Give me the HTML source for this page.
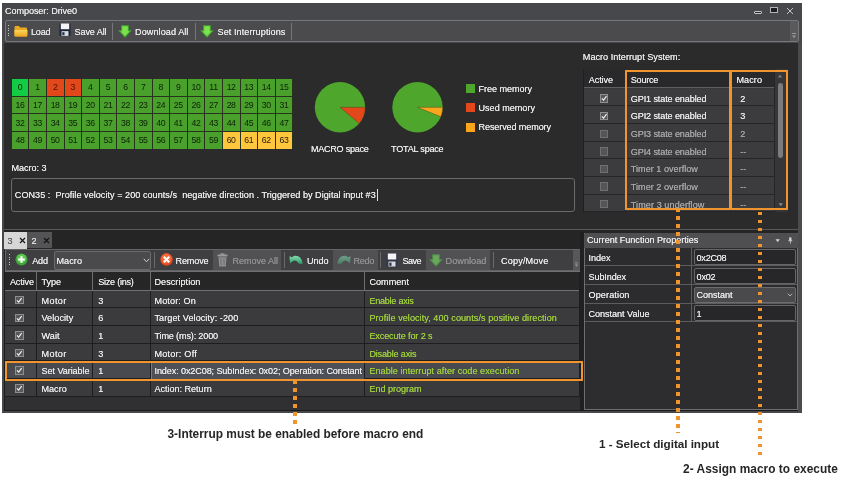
<!DOCTYPE html>
<html><head><meta charset="utf-8"><title>Composer: Drive0</title>
<style>
html,body{margin:0;padding:0;background:#fff;}
body{width:858px;height:496px;position:relative;overflow:hidden;font-family:"Liberation Sans",sans-serif;-webkit-font-smoothing:antialiased;}
#root{position:absolute;left:0;top:0;width:858px;height:496px;will-change:transform;}
div,span.t,svg{position:absolute;box-sizing:border-box;}
span.t{white-space:pre;text-shadow:0 0 0.6px;}
</style></head><body><div id="root">
<div style="left:2.20px;top:2.80px;width:799.80px;height:410.00px;background:#47484b;"></div>
<span class="t" style="left:5.00px;top:3.10px;height:16px;line-height:16px;font-size:9.1px;color:#e6e6e6;letter-spacing:-0.083px;">Composer: Drive0</span>
<div style="left:754.00px;top:11.00px;width:7.50px;height:2.80px;background:#2a2a2c;border:0.8px solid #c4c4c4;border-radius:1px;"></div>
<div style="left:770.00px;top:7.40px;width:8.00px;height:6.00px;background:#1e1e1e;border:1px solid #b4b4b6;border-top-width:1.6px;"></div>
<svg style="left:786px;top:6.5px;" width="8" height="8" viewBox="0 0 8 8"><path d="M1 1L7 7M7 1L1 7" stroke="#d0d0d0" stroke-width="0.9" fill="none"/></svg>
<div style="left:4.60px;top:19.50px;width:794.60px;height:22.80px;background:#4b4b4e;border:1px solid #77777a;border-radius:2px;"></div>
<div style="left:8.00px;top:25.00px;width:1.20px;height:1.20px;background:#c8c8c8;"></div>
<div style="left:8.00px;top:27.50px;width:1.20px;height:1.20px;background:#c8c8c8;"></div>
<div style="left:8.00px;top:30.00px;width:1.20px;height:1.20px;background:#c8c8c8;"></div>
<div style="left:8.00px;top:32.50px;width:1.20px;height:1.20px;background:#c8c8c8;"></div>
<div style="left:8.00px;top:35.00px;width:1.20px;height:1.20px;background:#c8c8c8;"></div>
<div style="left:790.00px;top:21.00px;width:8.00px;height:20.00px;background:#5a5a5d;"></div>
<svg style="left:791px;top:33px" width="6" height="6" viewBox="0 0 6 6"><path d="M1 0.5H5" stroke="#999" stroke-width="1"/><path d="M1 2.5H5L3 5Z" fill="#999"/></svg>
<svg style="left:14px;top:25.3px" width="14" height="12" viewBox="0 0 14 12"><defs><linearGradient id="fg" x1="0" y1="0" x2="0" y2="1"><stop offset="0" stop-color="#fbd65a"/><stop offset="1" stop-color="#f0a41c"/></linearGradient></defs><path d="M0.5 2.2Q0.5 1 1.6 1H5L6.2 2.4H12Q13 2.4 13 3.4V10.5Q13 11.5 12 11.5H1.5Q0.5 11.5 0.5 10.5Z" fill="#e9a820"/><path d="M0.5 5H13.5V10.6Q13.5 11.6 12.5 11.6H1.5Q0.5 11.6 0.5 10.6Z" fill="url(#fg)"/></svg>
<span class="t" style="left:31.00px;top:23.90px;height:16px;line-height:16px;font-size:9.1px;color:#e8e8e8;letter-spacing:-0.186px;">Load</span>
<svg style="left:58.5px;top:23.4px" width="12" height="13.4" viewBox="0 0 12 14" preserveAspectRatio="none"><rect x="0.5" y="0.5" width="11" height="13" rx="1" fill="#1c2438"/><rect x="1.8" y="0.5" width="8.4" height="6" fill="#f4f4f4"/><rect x="2.5" y="8.5" width="7" height="5" fill="#d8dbe2"/><rect x="3.3" y="9.6" width="2.2" height="3.2" fill="#2a3040"/></svg>
<span class="t" style="left:74.50px;top:23.90px;height:16px;line-height:16px;font-size:9.1px;color:#e8e8e8;letter-spacing:-0.110px;">Save All</span>
<div style="left:111.50px;top:23.00px;width:1.00px;height:17.00px;background:#77777a;"></div>
<svg style="left:118px;top:25px" width="14" height="13" viewBox="0 0 14 13"><path d="M3.2 0.3H10.8V5.2H13.8L7 12.8L0.2 5.2H3.2Z" fill="#3fae2a"/><path d="M4.2 1.2H9.8V6.2H11.6L7 11L2.4 6.2H4.2Z" fill="#7fe04f"/></svg>
<span class="t" style="left:135.00px;top:23.90px;height:16px;line-height:16px;font-size:9.1px;color:#e8e8e8;letter-spacing:0.074px;">Download All</span>
<div style="left:194.50px;top:23.00px;width:1.00px;height:17.00px;background:#77777a;"></div>
<svg style="left:200px;top:25px" width="14" height="13" viewBox="0 0 14 13"><path d="M3.2 0.3H10.8V5.2H13.8L7 12.8L0.2 5.2H3.2Z" fill="#3fae2a"/><path d="M4.2 1.2H9.8V6.2H11.6L7 11L2.4 6.2H4.2Z" fill="#7fe04f"/></svg>
<span class="t" style="left:217.50px;top:23.90px;height:16px;line-height:16px;font-size:9.1px;color:#e8e8e8;letter-spacing:0.072px;">Set Interruptions</span>
<div style="left:290.50px;top:23.00px;width:1.00px;height:17.00px;background:#77777a;"></div>
<div style="left:4.30px;top:43.00px;width:794.70px;height:186.50px;background:#2b2b2b;"></div>
<div style="left:11.50px;top:78.50px;width:281.20px;height:70.50px;background:#27331d;"></div>
<div style="left:11.80px;top:78.80px;width:16.60px;height:16.80px;background:#12cc46;"></div>
<span class="t" style="left:17.68px;top:79.20px;height:16px;line-height:16px;font-size:8.7px;color:#0d2208;letter-spacing:-0.35px;text-shadow:none;">0</span>
<div style="left:29.40px;top:78.80px;width:16.60px;height:16.80px;background:#49a02a;"></div>
<span class="t" style="left:35.28px;top:79.20px;height:16px;line-height:16px;font-size:8.7px;color:#0d2208;letter-spacing:-0.35px;text-shadow:none;">1</span>
<div style="left:47.00px;top:78.80px;width:16.60px;height:16.80px;background:#e2481a;"></div>
<span class="t" style="left:52.88px;top:79.20px;height:16px;line-height:16px;font-size:8.7px;color:#4a1204;letter-spacing:-0.35px;text-shadow:none;">2</span>
<div style="left:64.60px;top:78.80px;width:16.60px;height:16.80px;background:#e2481a;"></div>
<span class="t" style="left:70.48px;top:79.20px;height:16px;line-height:16px;font-size:8.7px;color:#4a1204;letter-spacing:-0.35px;text-shadow:none;">3</span>
<div style="left:82.20px;top:78.80px;width:16.60px;height:16.80px;background:#49a02a;"></div>
<span class="t" style="left:88.08px;top:79.20px;height:16px;line-height:16px;font-size:8.7px;color:#0d2208;letter-spacing:-0.35px;text-shadow:none;">4</span>
<div style="left:99.80px;top:78.80px;width:16.60px;height:16.80px;background:#49a02a;"></div>
<span class="t" style="left:105.68px;top:79.20px;height:16px;line-height:16px;font-size:8.7px;color:#0d2208;letter-spacing:-0.35px;text-shadow:none;">5</span>
<div style="left:117.40px;top:78.80px;width:16.60px;height:16.80px;background:#49a02a;"></div>
<span class="t" style="left:123.28px;top:79.20px;height:16px;line-height:16px;font-size:8.7px;color:#0d2208;letter-spacing:-0.35px;text-shadow:none;">6</span>
<div style="left:135.00px;top:78.80px;width:16.60px;height:16.80px;background:#49a02a;"></div>
<span class="t" style="left:140.88px;top:79.20px;height:16px;line-height:16px;font-size:8.7px;color:#0d2208;letter-spacing:-0.35px;text-shadow:none;">7</span>
<div style="left:152.60px;top:78.80px;width:16.60px;height:16.80px;background:#49a02a;"></div>
<span class="t" style="left:158.48px;top:79.20px;height:16px;line-height:16px;font-size:8.7px;color:#0d2208;letter-spacing:-0.35px;text-shadow:none;">8</span>
<div style="left:170.20px;top:78.80px;width:16.60px;height:16.80px;background:#49a02a;"></div>
<span class="t" style="left:176.08px;top:79.20px;height:16px;line-height:16px;font-size:8.7px;color:#0d2208;letter-spacing:-0.35px;text-shadow:none;">9</span>
<div style="left:187.80px;top:78.80px;width:16.60px;height:16.80px;background:#49a02a;"></div>
<span class="t" style="left:191.44px;top:79.20px;height:16px;line-height:16px;font-size:8.7px;color:#0d2208;letter-spacing:-0.35px;text-shadow:none;">10</span>
<div style="left:205.40px;top:78.80px;width:16.60px;height:16.80px;background:#49a02a;"></div>
<span class="t" style="left:209.36px;top:79.20px;height:16px;line-height:16px;font-size:8.7px;color:#0d2208;letter-spacing:-0.35px;text-shadow:none;">11</span>
<div style="left:223.00px;top:78.80px;width:16.60px;height:16.80px;background:#49a02a;"></div>
<span class="t" style="left:226.64px;top:79.20px;height:16px;line-height:16px;font-size:8.7px;color:#0d2208;letter-spacing:-0.35px;text-shadow:none;">12</span>
<div style="left:240.60px;top:78.80px;width:16.60px;height:16.80px;background:#49a02a;"></div>
<span class="t" style="left:244.24px;top:79.20px;height:16px;line-height:16px;font-size:8.7px;color:#0d2208;letter-spacing:-0.35px;text-shadow:none;">13</span>
<div style="left:258.20px;top:78.80px;width:16.60px;height:16.80px;background:#49a02a;"></div>
<span class="t" style="left:261.84px;top:79.20px;height:16px;line-height:16px;font-size:8.7px;color:#0d2208;letter-spacing:-0.35px;text-shadow:none;">14</span>
<div style="left:275.80px;top:78.80px;width:16.60px;height:16.80px;background:#49a02a;"></div>
<span class="t" style="left:279.44px;top:79.20px;height:16px;line-height:16px;font-size:8.7px;color:#0d2208;letter-spacing:-0.35px;text-shadow:none;">15</span>
<div style="left:11.80px;top:96.50px;width:16.60px;height:16.80px;background:#49a02a;"></div>
<span class="t" style="left:15.44px;top:96.90px;height:16px;line-height:16px;font-size:8.7px;color:#0d2208;letter-spacing:-0.35px;text-shadow:none;">16</span>
<div style="left:29.40px;top:96.50px;width:16.60px;height:16.80px;background:#49a02a;"></div>
<span class="t" style="left:33.04px;top:96.90px;height:16px;line-height:16px;font-size:8.7px;color:#0d2208;letter-spacing:-0.35px;text-shadow:none;">17</span>
<div style="left:47.00px;top:96.50px;width:16.60px;height:16.80px;background:#49a02a;"></div>
<span class="t" style="left:50.64px;top:96.90px;height:16px;line-height:16px;font-size:8.7px;color:#0d2208;letter-spacing:-0.35px;text-shadow:none;">18</span>
<div style="left:64.60px;top:96.50px;width:16.60px;height:16.80px;background:#49a02a;"></div>
<span class="t" style="left:68.24px;top:96.90px;height:16px;line-height:16px;font-size:8.7px;color:#0d2208;letter-spacing:-0.35px;text-shadow:none;">19</span>
<div style="left:82.20px;top:96.50px;width:16.60px;height:16.80px;background:#49a02a;"></div>
<span class="t" style="left:85.84px;top:96.90px;height:16px;line-height:16px;font-size:8.7px;color:#0d2208;letter-spacing:-0.35px;text-shadow:none;">20</span>
<div style="left:99.80px;top:96.50px;width:16.60px;height:16.80px;background:#49a02a;"></div>
<span class="t" style="left:103.44px;top:96.90px;height:16px;line-height:16px;font-size:8.7px;color:#0d2208;letter-spacing:-0.35px;text-shadow:none;">21</span>
<div style="left:117.40px;top:96.50px;width:16.60px;height:16.80px;background:#49a02a;"></div>
<span class="t" style="left:121.04px;top:96.90px;height:16px;line-height:16px;font-size:8.7px;color:#0d2208;letter-spacing:-0.35px;text-shadow:none;">22</span>
<div style="left:135.00px;top:96.50px;width:16.60px;height:16.80px;background:#49a02a;"></div>
<span class="t" style="left:138.64px;top:96.90px;height:16px;line-height:16px;font-size:8.7px;color:#0d2208;letter-spacing:-0.35px;text-shadow:none;">23</span>
<div style="left:152.60px;top:96.50px;width:16.60px;height:16.80px;background:#49a02a;"></div>
<span class="t" style="left:156.24px;top:96.90px;height:16px;line-height:16px;font-size:8.7px;color:#0d2208;letter-spacing:-0.35px;text-shadow:none;">24</span>
<div style="left:170.20px;top:96.50px;width:16.60px;height:16.80px;background:#49a02a;"></div>
<span class="t" style="left:173.84px;top:96.90px;height:16px;line-height:16px;font-size:8.7px;color:#0d2208;letter-spacing:-0.35px;text-shadow:none;">25</span>
<div style="left:187.80px;top:96.50px;width:16.60px;height:16.80px;background:#49a02a;"></div>
<span class="t" style="left:191.44px;top:96.90px;height:16px;line-height:16px;font-size:8.7px;color:#0d2208;letter-spacing:-0.35px;text-shadow:none;">26</span>
<div style="left:205.40px;top:96.50px;width:16.60px;height:16.80px;background:#49a02a;"></div>
<span class="t" style="left:209.04px;top:96.90px;height:16px;line-height:16px;font-size:8.7px;color:#0d2208;letter-spacing:-0.35px;text-shadow:none;">27</span>
<div style="left:223.00px;top:96.50px;width:16.60px;height:16.80px;background:#49a02a;"></div>
<span class="t" style="left:226.64px;top:96.90px;height:16px;line-height:16px;font-size:8.7px;color:#0d2208;letter-spacing:-0.35px;text-shadow:none;">28</span>
<div style="left:240.60px;top:96.50px;width:16.60px;height:16.80px;background:#49a02a;"></div>
<span class="t" style="left:244.24px;top:96.90px;height:16px;line-height:16px;font-size:8.7px;color:#0d2208;letter-spacing:-0.35px;text-shadow:none;">29</span>
<div style="left:258.20px;top:96.50px;width:16.60px;height:16.80px;background:#49a02a;"></div>
<span class="t" style="left:261.84px;top:96.90px;height:16px;line-height:16px;font-size:8.7px;color:#0d2208;letter-spacing:-0.35px;text-shadow:none;">30</span>
<div style="left:275.80px;top:96.50px;width:16.60px;height:16.80px;background:#49a02a;"></div>
<span class="t" style="left:279.44px;top:96.90px;height:16px;line-height:16px;font-size:8.7px;color:#0d2208;letter-spacing:-0.35px;text-shadow:none;">31</span>
<div style="left:11.80px;top:114.20px;width:16.60px;height:16.80px;background:#49a02a;"></div>
<span class="t" style="left:15.44px;top:114.60px;height:16px;line-height:16px;font-size:8.7px;color:#0d2208;letter-spacing:-0.35px;text-shadow:none;">32</span>
<div style="left:29.40px;top:114.20px;width:16.60px;height:16.80px;background:#49a02a;"></div>
<span class="t" style="left:33.04px;top:114.60px;height:16px;line-height:16px;font-size:8.7px;color:#0d2208;letter-spacing:-0.35px;text-shadow:none;">33</span>
<div style="left:47.00px;top:114.20px;width:16.60px;height:16.80px;background:#49a02a;"></div>
<span class="t" style="left:50.64px;top:114.60px;height:16px;line-height:16px;font-size:8.7px;color:#0d2208;letter-spacing:-0.35px;text-shadow:none;">34</span>
<div style="left:64.60px;top:114.20px;width:16.60px;height:16.80px;background:#49a02a;"></div>
<span class="t" style="left:68.24px;top:114.60px;height:16px;line-height:16px;font-size:8.7px;color:#0d2208;letter-spacing:-0.35px;text-shadow:none;">35</span>
<div style="left:82.20px;top:114.20px;width:16.60px;height:16.80px;background:#49a02a;"></div>
<span class="t" style="left:85.84px;top:114.60px;height:16px;line-height:16px;font-size:8.7px;color:#0d2208;letter-spacing:-0.35px;text-shadow:none;">36</span>
<div style="left:99.80px;top:114.20px;width:16.60px;height:16.80px;background:#49a02a;"></div>
<span class="t" style="left:103.44px;top:114.60px;height:16px;line-height:16px;font-size:8.7px;color:#0d2208;letter-spacing:-0.35px;text-shadow:none;">37</span>
<div style="left:117.40px;top:114.20px;width:16.60px;height:16.80px;background:#49a02a;"></div>
<span class="t" style="left:121.04px;top:114.60px;height:16px;line-height:16px;font-size:8.7px;color:#0d2208;letter-spacing:-0.35px;text-shadow:none;">38</span>
<div style="left:135.00px;top:114.20px;width:16.60px;height:16.80px;background:#49a02a;"></div>
<span class="t" style="left:138.64px;top:114.60px;height:16px;line-height:16px;font-size:8.7px;color:#0d2208;letter-spacing:-0.35px;text-shadow:none;">39</span>
<div style="left:152.60px;top:114.20px;width:16.60px;height:16.80px;background:#49a02a;"></div>
<span class="t" style="left:156.24px;top:114.60px;height:16px;line-height:16px;font-size:8.7px;color:#0d2208;letter-spacing:-0.35px;text-shadow:none;">40</span>
<div style="left:170.20px;top:114.20px;width:16.60px;height:16.80px;background:#49a02a;"></div>
<span class="t" style="left:173.84px;top:114.60px;height:16px;line-height:16px;font-size:8.7px;color:#0d2208;letter-spacing:-0.35px;text-shadow:none;">41</span>
<div style="left:187.80px;top:114.20px;width:16.60px;height:16.80px;background:#49a02a;"></div>
<span class="t" style="left:191.44px;top:114.60px;height:16px;line-height:16px;font-size:8.7px;color:#0d2208;letter-spacing:-0.35px;text-shadow:none;">42</span>
<div style="left:205.40px;top:114.20px;width:16.60px;height:16.80px;background:#49a02a;"></div>
<span class="t" style="left:209.04px;top:114.60px;height:16px;line-height:16px;font-size:8.7px;color:#0d2208;letter-spacing:-0.35px;text-shadow:none;">43</span>
<div style="left:223.00px;top:114.20px;width:16.60px;height:16.80px;background:#49a02a;"></div>
<span class="t" style="left:226.64px;top:114.60px;height:16px;line-height:16px;font-size:8.7px;color:#0d2208;letter-spacing:-0.35px;text-shadow:none;">44</span>
<div style="left:240.60px;top:114.20px;width:16.60px;height:16.80px;background:#49a02a;"></div>
<span class="t" style="left:244.24px;top:114.60px;height:16px;line-height:16px;font-size:8.7px;color:#0d2208;letter-spacing:-0.35px;text-shadow:none;">45</span>
<div style="left:258.20px;top:114.20px;width:16.60px;height:16.80px;background:#49a02a;"></div>
<span class="t" style="left:261.84px;top:114.60px;height:16px;line-height:16px;font-size:8.7px;color:#0d2208;letter-spacing:-0.35px;text-shadow:none;">46</span>
<div style="left:275.80px;top:114.20px;width:16.60px;height:16.80px;background:#49a02a;"></div>
<span class="t" style="left:279.44px;top:114.60px;height:16px;line-height:16px;font-size:8.7px;color:#0d2208;letter-spacing:-0.35px;text-shadow:none;">47</span>
<div style="left:11.80px;top:131.90px;width:16.60px;height:16.80px;background:#49a02a;"></div>
<span class="t" style="left:15.44px;top:132.30px;height:16px;line-height:16px;font-size:8.7px;color:#0d2208;letter-spacing:-0.35px;text-shadow:none;">48</span>
<div style="left:29.40px;top:131.90px;width:16.60px;height:16.80px;background:#49a02a;"></div>
<span class="t" style="left:33.04px;top:132.30px;height:16px;line-height:16px;font-size:8.7px;color:#0d2208;letter-spacing:-0.35px;text-shadow:none;">49</span>
<div style="left:47.00px;top:131.90px;width:16.60px;height:16.80px;background:#49a02a;"></div>
<span class="t" style="left:50.64px;top:132.30px;height:16px;line-height:16px;font-size:8.7px;color:#0d2208;letter-spacing:-0.35px;text-shadow:none;">50</span>
<div style="left:64.60px;top:131.90px;width:16.60px;height:16.80px;background:#49a02a;"></div>
<span class="t" style="left:68.24px;top:132.30px;height:16px;line-height:16px;font-size:8.7px;color:#0d2208;letter-spacing:-0.35px;text-shadow:none;">51</span>
<div style="left:82.20px;top:131.90px;width:16.60px;height:16.80px;background:#49a02a;"></div>
<span class="t" style="left:85.84px;top:132.30px;height:16px;line-height:16px;font-size:8.7px;color:#0d2208;letter-spacing:-0.35px;text-shadow:none;">52</span>
<div style="left:99.80px;top:131.90px;width:16.60px;height:16.80px;background:#49a02a;"></div>
<span class="t" style="left:103.44px;top:132.30px;height:16px;line-height:16px;font-size:8.7px;color:#0d2208;letter-spacing:-0.35px;text-shadow:none;">53</span>
<div style="left:117.40px;top:131.90px;width:16.60px;height:16.80px;background:#49a02a;"></div>
<span class="t" style="left:121.04px;top:132.30px;height:16px;line-height:16px;font-size:8.7px;color:#0d2208;letter-spacing:-0.35px;text-shadow:none;">54</span>
<div style="left:135.00px;top:131.90px;width:16.60px;height:16.80px;background:#49a02a;"></div>
<span class="t" style="left:138.64px;top:132.30px;height:16px;line-height:16px;font-size:8.7px;color:#0d2208;letter-spacing:-0.35px;text-shadow:none;">55</span>
<div style="left:152.60px;top:131.90px;width:16.60px;height:16.80px;background:#49a02a;"></div>
<span class="t" style="left:156.24px;top:132.30px;height:16px;line-height:16px;font-size:8.7px;color:#0d2208;letter-spacing:-0.35px;text-shadow:none;">56</span>
<div style="left:170.20px;top:131.90px;width:16.60px;height:16.80px;background:#49a02a;"></div>
<span class="t" style="left:173.84px;top:132.30px;height:16px;line-height:16px;font-size:8.7px;color:#0d2208;letter-spacing:-0.35px;text-shadow:none;">57</span>
<div style="left:187.80px;top:131.90px;width:16.60px;height:16.80px;background:#49a02a;"></div>
<span class="t" style="left:191.44px;top:132.30px;height:16px;line-height:16px;font-size:8.7px;color:#0d2208;letter-spacing:-0.35px;text-shadow:none;">58</span>
<div style="left:205.40px;top:131.90px;width:16.60px;height:16.80px;background:#49a02a;"></div>
<span class="t" style="left:209.04px;top:132.30px;height:16px;line-height:16px;font-size:8.7px;color:#0d2208;letter-spacing:-0.35px;text-shadow:none;">59</span>
<div style="left:223.00px;top:131.90px;width:16.60px;height:16.80px;background:#ffc63e;"></div>
<span class="t" style="left:226.64px;top:132.30px;height:16px;line-height:16px;font-size:8.7px;color:#2a2008;letter-spacing:-0.35px;text-shadow:none;">60</span>
<div style="left:240.60px;top:131.90px;width:16.60px;height:16.80px;background:#ffc63e;"></div>
<span class="t" style="left:244.24px;top:132.30px;height:16px;line-height:16px;font-size:8.7px;color:#2a2008;letter-spacing:-0.35px;text-shadow:none;">61</span>
<div style="left:258.20px;top:131.90px;width:16.60px;height:16.80px;background:#ffc63e;"></div>
<span class="t" style="left:261.84px;top:132.30px;height:16px;line-height:16px;font-size:8.7px;color:#2a2008;letter-spacing:-0.35px;text-shadow:none;">62</span>
<div style="left:275.80px;top:131.90px;width:16.60px;height:16.80px;background:#ffc63e;"></div>
<span class="t" style="left:279.44px;top:132.30px;height:16px;line-height:16px;font-size:8.7px;color:#2a2008;letter-spacing:-0.35px;text-shadow:none;">63</span>
<svg style="left:0;top:0" width="858" height="496"><circle cx="340" cy="107.3" r="25.2" fill="#4ea72c"/><path d="M340 107.3L365.2 107.3A25.2 25.2 0 0 1 359.30 123.50Z" fill="#e2481a" stroke="#3a3a20" stroke-width="0.4"/></svg>
<svg style="left:0;top:0" width="858" height="496"><circle cx="417.5" cy="107.3" r="25.2" fill="#4ea72c"/><path d="M417.5 107.3L442.7 107.3A25.2 25.2 0 0 1 440.87 116.74Z" fill="#fba51c" stroke="#3a3a20" stroke-width="0.4"/></svg>
<span class="t" style="left:311.00px;top:141.00px;height:16px;line-height:16px;font-size:9.1px;color:#e8e8e8;letter-spacing:-0.289px;">MACRO space</span>
<span class="t" style="left:391.00px;top:141.00px;height:16px;line-height:16px;font-size:9.1px;color:#e8e8e8;letter-spacing:-0.224px;">TOTAL space</span>
<div style="left:466.00px;top:84.00px;width:9.00px;height:9.00px;background:#4ea72c;"></div>
<div style="left:466.00px;top:103.00px;width:9.00px;height:9.00px;background:#e2481a;"></div>
<div style="left:466.00px;top:122.50px;width:9.00px;height:9.00px;background:#fba51c;"></div>
<span class="t" style="left:478.50px;top:80.50px;height:16px;line-height:16px;font-size:9.1px;color:#e8e8e8;letter-spacing:-0.055px;">Free memory</span>
<span class="t" style="left:478.50px;top:99.50px;height:16px;line-height:16px;font-size:9.1px;color:#e8e8e8;letter-spacing:-0.012px;">Used memory</span>
<span class="t" style="left:478.50px;top:119.00px;height:16px;line-height:16px;font-size:9.1px;color:#e8e8e8;letter-spacing:-0.123px;">Reserved memory</span>
<span class="t" style="left:11.50px;top:159.50px;height:16px;line-height:16px;font-size:9.1px;color:#e8e8e8;letter-spacing:-0.050px;">Macro: 3</span>
<div style="left:11.30px;top:178.00px;width:564.20px;height:33.50px;background:#2b2b2b;border:1px solid #6a6a6a;border-radius:3px;"></div>
<span class="t" style="left:14.80px;top:187.00px;height:16px;line-height:16px;font-size:9.1px;color:#e8e8e8;letter-spacing:0.031px;">CON35 :  Profile velocity = 200 counts/s  negative direction . Triggered by Digital input #3</span>
<div style="left:376.50px;top:189.00px;width:1.00px;height:12.00px;background:#e0e0e0;"></div>
<span class="t" style="left:582.80px;top:49.20px;height:16px;line-height:16px;font-size:9.1px;color:#e8e8e8;letter-spacing:0.017px;">Macro Interrupt System:</span>
<div style="left:582.70px;top:69.20px;width:203.80px;height:143.20px;background:#1f1f21;"></div>
<div style="left:583.50px;top:69.20px;width:203.00px;height:143.00px;background:#39393b;"></div>
<div style="left:583.50px;top:69.20px;width:190.50px;height:19.00px;background:#29292b;border-bottom:1px solid #5e5e60;"></div>
<span class="t" style="left:588.70px;top:72.10px;height:16px;line-height:16px;font-size:9.1px;color:#e8e8e8;letter-spacing:-0.080px;">Active</span>
<span class="t" style="left:630.80px;top:72.10px;height:16px;line-height:16px;font-size:9.1px;color:#e8e8e8;letter-spacing:-0.272px;">Source</span>
<span class="t" style="left:736.50px;top:72.10px;height:16px;line-height:16px;font-size:9.1px;color:#e8e8e8;letter-spacing:0.043px;">Macro</span>
<div style="left:583.50px;top:88.70px;width:190.50px;height:17.65px;background:#3c3c3e;border-bottom:1px solid #262628;"></div>
<div style="left:600.00px;top:94.20px;width:8.40px;height:8.40px;background:#58585a;border:1px solid #8e8e90;"></div>
<svg style="left:600.0px;top:94.2px" width="8.4" height="8.4" viewBox="0 0 9 9"><path d="M2 4.6L3.8 6.5L7 2.2" stroke="#f4f4f4" stroke-width="1.2" fill="none"/></svg>
<span class="t" style="left:630.80px;top:90.60px;height:16px;line-height:16px;font-size:9.1px;color:#e8e8e8;letter-spacing:-0.123px;">GPI1 state enabled</span>
<span class="t" style="left:740.20px;top:90.60px;height:16px;line-height:16px;font-size:9.1px;color:#e8e8e8;">2</span>
<div style="left:583.50px;top:106.35px;width:190.50px;height:17.65px;background:#3c3c3e;border-bottom:1px solid #262628;"></div>
<div style="left:600.00px;top:111.85px;width:8.40px;height:8.40px;background:#58585a;border:1px solid #8e8e90;"></div>
<svg style="left:600.0px;top:111.85px" width="8.4" height="8.4" viewBox="0 0 9 9"><path d="M2 4.6L3.8 6.5L7 2.2" stroke="#f4f4f4" stroke-width="1.2" fill="none"/></svg>
<span class="t" style="left:630.80px;top:108.25px;height:16px;line-height:16px;font-size:9.1px;color:#e8e8e8;letter-spacing:-0.123px;">GPI2 state enabled</span>
<span class="t" style="left:740.20px;top:108.25px;height:16px;line-height:16px;font-size:9.1px;color:#e8e8e8;">3</span>
<div style="left:583.50px;top:124.00px;width:190.50px;height:17.65px;background:#3c3c3e;border-bottom:1px solid #262628;"></div>
<div style="left:600.00px;top:129.50px;width:8.40px;height:8.40px;background:#555557;border:1px solid #707072;"></div>
<span class="t" style="left:630.80px;top:125.90px;height:16px;line-height:16px;font-size:9.1px;color:#a4a4a6;letter-spacing:-0.123px;">GPI3 state enabled</span>
<span class="t" style="left:740.20px;top:125.90px;height:16px;line-height:16px;font-size:9.1px;color:#a4a4a6;">2</span>
<div style="left:583.50px;top:141.65px;width:190.50px;height:17.65px;background:#3c3c3e;border-bottom:1px solid #262628;"></div>
<div style="left:600.00px;top:147.15px;width:8.40px;height:8.40px;background:#555557;border:1px solid #707072;"></div>
<span class="t" style="left:630.80px;top:143.55px;height:16px;line-height:16px;font-size:9.1px;color:#a4a4a6;letter-spacing:-0.123px;">GPI4 state enabled</span>
<span class="t" style="left:740.20px;top:143.55px;height:16px;line-height:16px;font-size:9.1px;color:#a4a4a6;">--</span>
<div style="left:583.50px;top:159.30px;width:190.50px;height:17.65px;background:#3c3c3e;border-bottom:1px solid #262628;"></div>
<div style="left:600.00px;top:164.80px;width:8.40px;height:8.40px;background:#555557;border:1px solid #707072;"></div>
<span class="t" style="left:630.80px;top:161.20px;height:16px;line-height:16px;font-size:9.1px;color:#a4a4a6;letter-spacing:0.018px;">Timer 1 overflow</span>
<span class="t" style="left:740.20px;top:161.20px;height:16px;line-height:16px;font-size:9.1px;color:#a4a4a6;">--</span>
<div style="left:583.50px;top:176.95px;width:190.50px;height:17.65px;background:#3c3c3e;border-bottom:1px solid #262628;"></div>
<div style="left:600.00px;top:182.45px;width:8.40px;height:8.40px;background:#555557;border:1px solid #707072;"></div>
<span class="t" style="left:630.80px;top:178.85px;height:16px;line-height:16px;font-size:9.1px;color:#a4a4a6;letter-spacing:0.018px;">Timer 2 overflow</span>
<span class="t" style="left:740.20px;top:178.85px;height:16px;line-height:16px;font-size:9.1px;color:#a4a4a6;">--</span>
<div style="left:583.50px;top:194.60px;width:190.50px;height:17.60px;background:#3c3c3e;border-bottom:1px solid #262628;"></div>
<div style="left:600.00px;top:200.10px;width:8.40px;height:8.40px;background:#555557;border:1px solid #707072;"></div>
<span class="t" style="left:630.80px;top:196.50px;height:16px;line-height:16px;font-size:9.1px;color:#a4a4a6;letter-spacing:0.071px;">Timer 3 underflow</span>
<span class="t" style="left:740.20px;top:196.50px;height:16px;line-height:16px;font-size:9.1px;color:#a4a4a6;">--</span>
<div style="left:625.00px;top:69.20px;width:1.00px;height:143.00px;background:#262628;"></div>
<div style="left:730.00px;top:69.20px;width:1.00px;height:143.00px;background:#262628;"></div>
<div style="left:773.50px;top:69.20px;width:1.00px;height:143.00px;background:#262628;"></div>
<div style="left:774.50px;top:69.20px;width:12.00px;height:143.00px;background:#363638;"></div>
<div style="left:778.00px;top:82.50px;width:4.80px;height:75.50px;background:#7c7c7e;border-radius:2.4px;"></div>
<svg style="left:777.4px;top:74px" width="6" height="3.8" viewBox="0 0 7 5"><path d="M0.5 4.5L3.5 0.5L6.5 4.5Z" fill="#7a7a7c"/></svg>
<svg style="left:777.6px;top:202.8px" width="5.6" height="3.6" viewBox="0 0 7 5"><path d="M0.5 0.5L3.5 4.5L6.5 0.5Z" fill="#8a8a8c"/></svg>
<div style="left:625.20px;top:70.20px;width:163.00px;height:139.70px;border:2.8px solid #f0952d;"></div>
<div style="left:729.00px;top:70.20px;width:3.00px;height:139.70px;background:#f0952d;"></div>
<div style="left:4.30px;top:229.00px;width:794.70px;height:1.00px;background:#5a5a5c;"></div>
<div style="left:4.30px;top:230.00px;width:794.70px;height:181.00px;background:#252526;"></div>
<div style="left:4.00px;top:231.50px;width:23.40px;height:17.00px;background:#d6d6d6;"></div>
<span class="t" style="left:7.50px;top:232.50px;height:16px;line-height:16px;font-size:9.1px;color:#606062;">3</span>
<svg style="left:18.5px;top:237px" width="7" height="7" viewBox="0 0 7 7"><path d="M1 1L6 6M6 1L1 6" stroke="#111" stroke-width="1.1" fill="none"/></svg>
<div style="left:27.40px;top:232.30px;width:24.20px;height:16.20px;background:#545456;"></div>
<span class="t" style="left:31.50px;top:232.50px;height:16px;line-height:16px;font-size:9.1px;color:#e0e0e0;">2</span>
<svg style="left:43px;top:237px" width="7" height="7" viewBox="0 0 7 7"><path d="M1 1L6 6M6 1L1 6" stroke="#111" stroke-width="1.1" fill="none"/></svg>
<div style="left:580.00px;top:232.00px;width:4.20px;height:178.00px;background:#202021;"></div>
<div style="left:4.60px;top:249.00px;width:575.40px;height:21.60px;background:#3f3f41;border:1px solid #646466;"></div>
<div style="left:8.50px;top:254.00px;width:1.20px;height:1.20px;background:#c8c8c8;"></div>
<div style="left:8.50px;top:256.50px;width:1.20px;height:1.20px;background:#c8c8c8;"></div>
<div style="left:8.50px;top:259.00px;width:1.20px;height:1.20px;background:#c8c8c8;"></div>
<div style="left:8.50px;top:261.50px;width:1.20px;height:1.20px;background:#c8c8c8;"></div>
<div style="left:8.50px;top:264.00px;width:1.20px;height:1.20px;background:#c8c8c8;"></div>
<svg style="left:15px;top:253px" width="13" height="13" viewBox="0 0 13 13"><circle cx="6.5" cy="6.5" r="6" fill="#3ca53a"/><circle cx="6.5" cy="5.5" r="4.6" fill="#5fc74f"/><path d="M6.5 3.2V9.8M3.2 6.5H9.8" stroke="#fff" stroke-width="2"/></svg>
<span class="t" style="left:32.20px;top:252.60px;height:16px;line-height:16px;font-size:9.1px;color:#e8e8e8;letter-spacing:-0.131px;">Add</span>
<div style="left:53.50px;top:250.50px;width:97.50px;height:19.00px;background:#4a4a4d;border:1px solid #6a6a6c;border-radius:2px;"></div>
<span class="t" style="left:56.50px;top:252.60px;height:16px;line-height:16px;font-size:9.1px;color:#e8e8e8;letter-spacing:0.043px;">Macro</span>
<svg style="left:142.5px;top:257.5px" width="7" height="5" viewBox="0 0 7 5"><path d="M0.8 0.8L3.5 3.8L6.2 0.8" stroke="#ccc" stroke-width="1" fill="none"/></svg>
<div style="left:153.50px;top:252.00px;width:1.00px;height:16.00px;background:#6a6a6c;"></div>
<svg style="left:159.5px;top:253px" width="13" height="13" viewBox="0 0 13 13"><circle cx="6.5" cy="6.5" r="6.2" fill="#e8481c"/><circle cx="6.5" cy="5.6" r="5" fill="#f46a3c"/><path d="M3.8 3.8L9.2 9.2M9.2 3.8L3.8 9.2" stroke="#fff" stroke-width="2"/></svg>
<span class="t" style="left:175.50px;top:252.60px;height:16px;line-height:16px;font-size:9.1px;color:#e8e8e8;letter-spacing:-0.148px;">Remove</span>
<div style="left:213.00px;top:250.00px;width:68.00px;height:20.00px;background:#515154;"></div>
<svg style="left:217px;top:253px" width="11" height="14" viewBox="0 0 11 14"><rect x="0.5" y="1.5" width="10" height="2" fill="#9a9a9c"/><rect x="3.5" y="0.3" width="4" height="1.5" fill="#9a9a9c"/><path d="M1.5 4.2H9.5L8.8 13.5H2.2Z" fill="#8e8e90"/><path d="M4 5.5V12M7 5.5V12" stroke="#6e6e70" stroke-width="1"/></svg>
<span class="t" style="left:232.50px;top:252.60px;height:16px;line-height:16px;font-size:9.1px;color:#8f8f91;letter-spacing:-0.053px;">Remove All</span>
<div style="left:284.00px;top:252.00px;width:1.00px;height:16.00px;background:#6a6a6c;"></div>
<svg style="left:289px;top:254.8px" width="14" height="9" viewBox="0 0 14 9"><defs><linearGradient id="cge" x1="0" y1="0" x2="0" y2="1"><stop offset="0" stop-color="#86dcae"/><stop offset="1" stop-color="#2f9c68"/></linearGradient></defs><g><path d="M0.4 1.2L1.1 8.2L3.7 6.3Q6.6 3.9 10 8.7L13.7 8.7Q12.6 0.5 6 0.7Q4.2 0.8 3 2.2Z" fill="url(#cge)"/></g></svg>
<span class="t" style="left:307.00px;top:252.60px;height:16px;line-height:16px;font-size:9.1px;color:#e8e8e8;letter-spacing:-0.064px;">Undo</span>
<div style="left:333.00px;top:250.00px;width:44.50px;height:20.00px;background:#515154;"></div>
<svg style="left:336.5px;top:254.8px" width="14" height="9" viewBox="0 0 14 9"><defs><linearGradient id="cgd" x1="0" y1="0" x2="0" y2="1"><stop offset="0" stop-color="#6f9f88"/><stop offset="1" stop-color="#4f7f68"/></linearGradient></defs><g transform="translate(14,0) scale(-1,1)"><path d="M0.4 1.2L1.1 8.2L3.7 6.3Q6.6 3.9 10 8.7L13.7 8.7Q12.6 0.5 6 0.7Q4.2 0.8 3 2.2Z" fill="url(#cgd)"/></g></svg>
<span class="t" style="left:353.50px;top:252.60px;height:16px;line-height:16px;font-size:9.1px;color:#8f8f91;letter-spacing:-0.314px;">Redo</span>
<div style="left:380.00px;top:252.00px;width:1.00px;height:16.00px;background:#6a6a6c;"></div>
<svg style="left:386px;top:253px" width="12" height="14" viewBox="0 0 12 14"><rect x="0.5" y="0.5" width="11" height="13" rx="1" fill="#30384a"/><rect x="1.8" y="0.5" width="8.4" height="6" fill="#f4f4f4"/><rect x="2.5" y="8.5" width="7" height="5" fill="#d8dbe2"/><rect x="3.3" y="9.6" width="2.2" height="3.2" fill="#2a3040"/></svg>
<span class="t" style="left:402.50px;top:252.60px;height:16px;line-height:16px;font-size:9.1px;color:#e8e8e8;letter-spacing:-0.561px;">Save</span>
<div style="left:426.00px;top:250.00px;width:64.00px;height:20.00px;background:#515154;"></div>
<svg style="left:428.5px;top:253.5px" width="14" height="13" viewBox="0 0 14 13"><path d="M3.2 0.3H10.8V5.2H13.8L7 12.8L0.2 5.2H3.2Z" fill="#4f8f44"/><path d="M4.2 1.2H9.8V6.2H11.6L7 11L2.4 6.2H4.2Z" fill="#6aa860"/></svg>
<span class="t" style="left:445.50px;top:252.60px;height:16px;line-height:16px;font-size:9.1px;color:#8f8f91;letter-spacing:0.066px;">Download</span>
<div style="left:492.50px;top:252.00px;width:1.00px;height:16.00px;background:#6a6a6c;"></div>
<span class="t" style="left:501.00px;top:252.60px;height:16px;line-height:16px;font-size:9.1px;color:#e8e8e8;letter-spacing:0.164px;">Copy/Move</span>
<div style="left:572.50px;top:250.00px;width:7.00px;height:20.00px;background:#58585b;"></div>
<svg style="left:573.5px;top:262px" width="5" height="6" viewBox="0 0 6 6"><path d="M1 0.5H5" stroke="#999" stroke-width="1"/><path d="M1 2.5H5L3 5Z" fill="#999"/></svg>
<div style="left:4.00px;top:271.00px;width:576.00px;height:139.00px;background:#1c1c1d;"></div>
<div style="left:5.00px;top:271.00px;width:575.00px;height:138.80px;background:#303032;"></div>
<div style="left:5.00px;top:271.00px;width:575.00px;height:20.00px;background:#262627;border-top:1px solid #707072;border-bottom:1px solid #707072;"></div>
<span class="t" style="left:9.90px;top:273.50px;height:16px;line-height:16px;font-size:9.1px;color:#e8e8e8;letter-spacing:-0.114px;">Active</span>
<span class="t" style="left:41.50px;top:273.50px;height:16px;line-height:16px;font-size:9.1px;color:#e8e8e8;letter-spacing:-0.057px;">Type</span>
<span class="t" style="left:98.20px;top:273.50px;height:16px;line-height:16px;font-size:9.1px;color:#e8e8e8;letter-spacing:-0.253px;">Size (ins)</span>
<span class="t" style="left:154.50px;top:273.50px;height:16px;line-height:16px;font-size:9.1px;color:#e8e8e8;letter-spacing:0.035px;">Description</span>
<span class="t" style="left:369.40px;top:273.50px;height:16px;line-height:16px;font-size:9.1px;color:#e8e8e8;letter-spacing:0.022px;">Comment</span>
<div style="left:5.00px;top:290.80px;width:575.00px;height:17.62px;background:#3b3b3d;border-bottom:1px solid #1e1e20;"></div>
<div style="left:15.30px;top:295.90px;width:8.60px;height:8.60px;background:#58585a;border:1px solid #8e8e90;"></div>
<svg style="left:15.3px;top:295.9px" width="8.6" height="8.6" viewBox="0 0 9 9"><path d="M2 4.6L3.8 6.5L7 2.2" stroke="#f4f4f4" stroke-width="1.2" fill="none"/></svg>
<span class="t" style="left:41.50px;top:292.70px;height:16px;line-height:16px;font-size:9.1px;color:#e8e8e8;letter-spacing:0.388px;">Motor</span>
<span class="t" style="left:98.20px;top:292.70px;height:16px;line-height:16px;font-size:9.1px;color:#e8e8e8;">3</span>
<span class="t" style="left:154.50px;top:292.70px;height:16px;line-height:16px;font-size:9.1px;color:#e8e8e8;letter-spacing:0.116px;">Motor: On</span>
<span class="t" style="left:369.40px;top:292.70px;height:16px;line-height:16px;font-size:9.1px;color:#9ccc3c;letter-spacing:-0.259px;">Enable axis</span>
<div style="left:5.00px;top:308.42px;width:575.00px;height:17.62px;background:#3b3b3d;border-bottom:1px solid #1e1e20;"></div>
<div style="left:15.30px;top:313.52px;width:8.60px;height:8.60px;background:#58585a;border:1px solid #8e8e90;"></div>
<svg style="left:15.3px;top:313.52px" width="8.6" height="8.6" viewBox="0 0 9 9"><path d="M2 4.6L3.8 6.5L7 2.2" stroke="#f4f4f4" stroke-width="1.2" fill="none"/></svg>
<span class="t" style="left:41.50px;top:310.32px;height:16px;line-height:16px;font-size:9.1px;color:#e8e8e8;letter-spacing:0.055px;">Velocity</span>
<span class="t" style="left:98.20px;top:310.32px;height:16px;line-height:16px;font-size:9.1px;color:#e8e8e8;">6</span>
<span class="t" style="left:154.50px;top:310.32px;height:16px;line-height:16px;font-size:9.1px;color:#e8e8e8;letter-spacing:0.069px;">Target Velocity: -200</span>
<span class="t" style="left:369.40px;top:310.32px;height:16px;line-height:16px;font-size:9.1px;color:#9ccc3c;letter-spacing:0.054px;">Profile velocity, 400 counts/s positive direction</span>
<div style="left:5.00px;top:326.04px;width:575.00px;height:17.62px;background:#3b3b3d;border-bottom:1px solid #1e1e20;"></div>
<div style="left:15.30px;top:331.14px;width:8.60px;height:8.60px;background:#58585a;border:1px solid #8e8e90;"></div>
<svg style="left:15.3px;top:331.14px" width="8.6" height="8.6" viewBox="0 0 9 9"><path d="M2 4.6L3.8 6.5L7 2.2" stroke="#f4f4f4" stroke-width="1.2" fill="none"/></svg>
<span class="t" style="left:41.50px;top:327.94px;height:16px;line-height:16px;font-size:9.1px;color:#e8e8e8;letter-spacing:0.059px;">Wait</span>
<span class="t" style="left:98.20px;top:327.94px;height:16px;line-height:16px;font-size:9.1px;color:#e8e8e8;">1</span>
<span class="t" style="left:154.50px;top:327.94px;height:16px;line-height:16px;font-size:9.1px;color:#e8e8e8;letter-spacing:-0.160px;">Time (ms): 2000</span>
<span class="t" style="left:369.40px;top:327.94px;height:16px;line-height:16px;font-size:9.1px;color:#9ccc3c;letter-spacing:-0.140px;">Excecute for 2 s</span>
<div style="left:5.00px;top:343.66px;width:575.00px;height:17.62px;background:#3b3b3d;border-bottom:1px solid #1e1e20;"></div>
<div style="left:15.30px;top:348.76px;width:8.60px;height:8.60px;background:#58585a;border:1px solid #8e8e90;"></div>
<svg style="left:15.3px;top:348.76px" width="8.6" height="8.6" viewBox="0 0 9 9"><path d="M2 4.6L3.8 6.5L7 2.2" stroke="#f4f4f4" stroke-width="1.2" fill="none"/></svg>
<span class="t" style="left:41.50px;top:345.56px;height:16px;line-height:16px;font-size:9.1px;color:#e8e8e8;letter-spacing:0.388px;">Motor</span>
<span class="t" style="left:98.20px;top:345.56px;height:16px;line-height:16px;font-size:9.1px;color:#e8e8e8;">3</span>
<span class="t" style="left:154.50px;top:345.56px;height:16px;line-height:16px;font-size:9.1px;color:#e8e8e8;letter-spacing:0.221px;">Motor: Off</span>
<span class="t" style="left:369.40px;top:345.56px;height:16px;line-height:16px;font-size:9.1px;color:#9ccc3c;letter-spacing:-0.180px;">Disable axis</span>
<div style="left:5.00px;top:361.28px;width:575.00px;height:17.62px;background:#484a50;border-bottom:1px solid #1e1e20;"></div>
<div style="left:150.50px;top:362.50px;width:213.80px;height:16.00px;background:#4e5058;border-left:1px solid #6f7e96;"></div>
<div style="left:15.30px;top:366.38px;width:8.60px;height:8.60px;background:#58585a;border:1px solid #8e8e90;"></div>
<svg style="left:15.3px;top:366.38px" width="8.6" height="8.6" viewBox="0 0 9 9"><path d="M2 4.6L3.8 6.5L7 2.2" stroke="#f4f4f4" stroke-width="1.2" fill="none"/></svg>
<span class="t" style="left:41.50px;top:363.18px;height:16px;line-height:16px;font-size:9.1px;color:#e8e8e8;letter-spacing:-0.075px;">Set Variable</span>
<span class="t" style="left:98.20px;top:363.18px;height:16px;line-height:16px;font-size:9.1px;color:#e8e8e8;">1</span>
<span class="t" style="left:154.50px;top:363.18px;height:16px;line-height:16px;font-size:9.1px;color:#e8e8e8;letter-spacing:-0.120px;">Index: 0x2C08; SubIndex: 0x02; Operation: Constant</span>
<span class="t" style="left:369.40px;top:363.18px;height:16px;line-height:16px;font-size:9.1px;color:#9ccc3c;letter-spacing:0.037px;">Enable interrupt after code execution</span>
<div style="left:5.00px;top:378.90px;width:575.00px;height:17.62px;background:#3b3b3d;border-bottom:1px solid #1e1e20;"></div>
<div style="left:15.30px;top:384.00px;width:8.60px;height:8.60px;background:#58585a;border:1px solid #8e8e90;"></div>
<svg style="left:15.3px;top:384.0px" width="8.6" height="8.6" viewBox="0 0 9 9"><path d="M2 4.6L3.8 6.5L7 2.2" stroke="#f4f4f4" stroke-width="1.2" fill="none"/></svg>
<span class="t" style="left:41.50px;top:380.80px;height:16px;line-height:16px;font-size:9.1px;color:#e8e8e8;letter-spacing:-0.017px;">Macro</span>
<span class="t" style="left:98.20px;top:380.80px;height:16px;line-height:16px;font-size:9.1px;color:#e8e8e8;">1</span>
<span class="t" style="left:154.50px;top:380.80px;height:16px;line-height:16px;font-size:9.1px;color:#e8e8e8;letter-spacing:-0.033px;">Action: Return</span>
<span class="t" style="left:369.40px;top:380.80px;height:16px;line-height:16px;font-size:9.1px;color:#9ccc3c;letter-spacing:-0.028px;">End program</span>
<div style="left:36.00px;top:272.00px;width:1.00px;height:19.00px;background:#707072;"></div>
<div style="left:36.00px;top:291.00px;width:1.00px;height:105.50px;background:#1e1e20;"></div>
<div style="left:92.20px;top:272.00px;width:1.00px;height:19.00px;background:#707072;"></div>
<div style="left:92.20px;top:291.00px;width:1.00px;height:105.50px;background:#1e1e20;"></div>
<div style="left:149.50px;top:272.00px;width:1.00px;height:19.00px;background:#707072;"></div>
<div style="left:149.50px;top:291.00px;width:1.00px;height:105.50px;background:#1e1e20;"></div>
<div style="left:364.30px;top:272.00px;width:1.00px;height:19.00px;background:#707072;"></div>
<div style="left:364.30px;top:291.00px;width:1.00px;height:105.50px;background:#1e1e20;"></div>
<div style="left:579.00px;top:272.00px;width:1.00px;height:124.50px;background:#1e1e20;"></div>
<div style="left:5.30px;top:360.80px;width:578.00px;height:19.80px;border:2.8px solid #f0952d;"></div>
<div style="left:584.20px;top:232.80px;width:213.40px;height:177.60px;background:#2d2d2f;border:1px solid #6e6e70;border-top:none;"></div>
<div style="left:584.20px;top:232.80px;width:213.40px;height:14.80px;background:#4f4f51;border-radius:2px 2px 0 0;"></div>
<span class="t" style="left:587.00px;top:232.20px;height:16px;line-height:16px;font-size:9.1px;color:#e8e8e8;letter-spacing:-0.014px;">Current Function Properties</span>
<svg style="left:774.8px;top:239.2px" width="5.4" height="3.4" viewBox="0 0 7 5"><path d="M0.3 0.5L3.5 4.6L6.7 0.5Z" fill="#d8d8d8"/></svg>
<svg style="left:788.2px;top:236.8px" width="4.6" height="7" viewBox="0 0 6 9"><rect x="1.5" y="0.5" width="3" height="4" fill="#d8d8d8"/><rect x="0.5" y="4.2" width="5" height="1.2" fill="#d8d8d8"/><rect x="2.6" y="5" width="0.9" height="3.5" fill="#d8d8d8"/></svg>
<div style="left:585.20px;top:247.60px;width:211.40px;height:18.70px;background:#2c2c2e;border-bottom:1px solid #5c5c5e;"></div>
<span class="t" style="left:588.50px;top:249.90px;height:16px;line-height:16px;font-size:9.1px;color:#e8e8e8;letter-spacing:-0.072px;">Index</span>
<div style="left:693.50px;top:249.20px;width:102.00px;height:16.00px;background:#272729;border:1px solid #666668;border-radius:2px;"></div>
<span class="t" style="left:696.60px;top:249.90px;height:16px;line-height:16px;font-size:9.1px;color:#e8e8e8;letter-spacing:-0.278px;">0x2C08</span>
<div style="left:585.20px;top:266.30px;width:211.40px;height:18.70px;background:#2c2c2e;border-bottom:1px solid #5c5c5e;"></div>
<span class="t" style="left:588.50px;top:268.60px;height:16px;line-height:16px;font-size:9.1px;color:#e8e8e8;letter-spacing:-0.119px;">SubIndex</span>
<div style="left:693.50px;top:267.90px;width:102.00px;height:16.00px;background:#272729;border:1px solid #666668;border-radius:2px;"></div>
<span class="t" style="left:696.60px;top:268.60px;height:16px;line-height:16px;font-size:9.1px;color:#e8e8e8;letter-spacing:-0.258px;">0x02</span>
<div style="left:585.20px;top:285.00px;width:211.40px;height:18.70px;background:#2c2c2e;border-bottom:1px solid #5c5c5e;"></div>
<span class="t" style="left:588.50px;top:287.30px;height:16px;line-height:16px;font-size:9.1px;color:#e8e8e8;letter-spacing:0.115px;">Operation</span>
<div style="left:693.50px;top:286.60px;width:102.00px;height:16.00px;background:#4a4a4d;border:1px solid #6c6c6e;border-radius:2px;"></div>
<svg style="left:787.4px;top:292.6px" width="6" height="4" viewBox="0 0 7 5"><path d="M0.8 0.8L3.5 3.8L6.2 0.8" stroke="#ccc" stroke-width="1" fill="none"/></svg>
<span class="t" style="left:696.60px;top:287.30px;height:16px;line-height:16px;font-size:9.1px;color:#e8e8e8;letter-spacing:-0.053px;">Constant</span>
<div style="left:585.20px;top:303.70px;width:211.40px;height:18.70px;background:#2c2c2e;border-bottom:1px solid #5c5c5e;"></div>
<span class="t" style="left:588.50px;top:306.00px;height:16px;line-height:16px;font-size:9.1px;color:#e8e8e8;letter-spacing:-0.039px;">Constant Value</span>
<div style="left:693.50px;top:305.30px;width:102.00px;height:16.00px;background:#272729;border:1px solid #666668;border-radius:2px;"></div>
<span class="t" style="left:696.60px;top:306.00px;height:16px;line-height:16px;font-size:9.1px;color:#e8e8e8;">1</span>
<div style="left:691.30px;top:247.60px;width:1.00px;height:74.80px;background:#5c5c5e;"></div>
<div style="left:4.00px;top:409.80px;width:795.00px;height:1.20px;background:#1a1a1b;"></div>
<div style="left:797.60px;top:43.00px;width:4.40px;height:369.80px;background:#4a4b4e;"></div>
<div style="left:675.85px;top:208.30px;width:4.30px;height:3.90px;background:#f0952d;"></div>
<div style="left:675.85px;top:216.30px;width:4.30px;height:3.90px;background:#f0952d;"></div>
<div style="left:675.85px;top:224.30px;width:4.30px;height:3.90px;background:#f0952d;"></div>
<div style="left:675.85px;top:232.30px;width:4.30px;height:3.90px;background:#f0952d;"></div>
<div style="left:675.85px;top:240.30px;width:4.30px;height:3.90px;background:#f0952d;"></div>
<div style="left:675.85px;top:248.30px;width:4.30px;height:3.90px;background:#f0952d;"></div>
<div style="left:675.85px;top:256.30px;width:4.30px;height:3.90px;background:#f0952d;"></div>
<div style="left:675.85px;top:264.30px;width:4.30px;height:3.90px;background:#f0952d;"></div>
<div style="left:675.85px;top:272.30px;width:4.30px;height:3.90px;background:#f0952d;"></div>
<div style="left:675.85px;top:280.30px;width:4.30px;height:3.90px;background:#f0952d;"></div>
<div style="left:675.85px;top:288.30px;width:4.30px;height:3.90px;background:#f0952d;"></div>
<div style="left:675.85px;top:296.30px;width:4.30px;height:3.90px;background:#f0952d;"></div>
<div style="left:675.85px;top:304.30px;width:4.30px;height:3.90px;background:#f0952d;"></div>
<div style="left:675.85px;top:312.30px;width:4.30px;height:3.90px;background:#f0952d;"></div>
<div style="left:675.85px;top:320.30px;width:4.30px;height:3.90px;background:#f0952d;"></div>
<div style="left:675.85px;top:328.30px;width:4.30px;height:3.90px;background:#f0952d;"></div>
<div style="left:675.85px;top:336.30px;width:4.30px;height:3.90px;background:#f0952d;"></div>
<div style="left:675.85px;top:344.30px;width:4.30px;height:3.90px;background:#f0952d;"></div>
<div style="left:675.85px;top:352.30px;width:4.30px;height:3.90px;background:#f0952d;"></div>
<div style="left:675.85px;top:360.30px;width:4.30px;height:3.90px;background:#f0952d;"></div>
<div style="left:675.85px;top:368.30px;width:4.30px;height:3.90px;background:#f0952d;"></div>
<div style="left:675.85px;top:376.30px;width:4.30px;height:3.90px;background:#f0952d;"></div>
<div style="left:675.85px;top:384.30px;width:4.30px;height:3.90px;background:#f0952d;"></div>
<div style="left:675.85px;top:392.30px;width:4.30px;height:3.90px;background:#f0952d;"></div>
<div style="left:675.85px;top:400.30px;width:4.30px;height:3.90px;background:#f0952d;"></div>
<div style="left:675.85px;top:408.30px;width:4.30px;height:3.90px;background:#f0952d;"></div>
<div style="left:675.85px;top:416.30px;width:4.30px;height:3.90px;background:#f0952d;"></div>
<div style="left:675.85px;top:424.30px;width:4.30px;height:3.90px;background:#f0952d;"></div>
<div style="left:675.85px;top:432.30px;width:4.30px;height:1.20px;background:#f0952d;"></div>
<div style="left:757.85px;top:211.50px;width:4.30px;height:3.90px;background:#f0952d;"></div>
<div style="left:757.85px;top:219.50px;width:4.30px;height:3.90px;background:#f0952d;"></div>
<div style="left:757.85px;top:227.50px;width:4.30px;height:3.90px;background:#f0952d;"></div>
<div style="left:757.85px;top:235.50px;width:4.30px;height:3.90px;background:#f0952d;"></div>
<div style="left:757.85px;top:243.50px;width:4.30px;height:3.90px;background:#f0952d;"></div>
<div style="left:757.85px;top:251.50px;width:4.30px;height:3.90px;background:#f0952d;"></div>
<div style="left:757.85px;top:259.50px;width:4.30px;height:3.90px;background:#f0952d;"></div>
<div style="left:757.85px;top:267.50px;width:4.30px;height:3.90px;background:#f0952d;"></div>
<div style="left:757.85px;top:275.50px;width:4.30px;height:3.90px;background:#f0952d;"></div>
<div style="left:757.85px;top:283.50px;width:4.30px;height:3.90px;background:#f0952d;"></div>
<div style="left:757.85px;top:291.50px;width:4.30px;height:3.90px;background:#f0952d;"></div>
<div style="left:757.85px;top:299.50px;width:4.30px;height:3.90px;background:#f0952d;"></div>
<div style="left:757.85px;top:307.50px;width:4.30px;height:3.90px;background:#f0952d;"></div>
<div style="left:757.85px;top:315.50px;width:4.30px;height:3.90px;background:#f0952d;"></div>
<div style="left:757.85px;top:323.50px;width:4.30px;height:3.90px;background:#f0952d;"></div>
<div style="left:757.85px;top:331.50px;width:4.30px;height:3.90px;background:#f0952d;"></div>
<div style="left:757.85px;top:339.50px;width:4.30px;height:3.90px;background:#f0952d;"></div>
<div style="left:757.85px;top:347.50px;width:4.30px;height:3.90px;background:#f0952d;"></div>
<div style="left:757.85px;top:355.50px;width:4.30px;height:3.90px;background:#f0952d;"></div>
<div style="left:757.85px;top:363.50px;width:4.30px;height:3.90px;background:#f0952d;"></div>
<div style="left:757.85px;top:371.50px;width:4.30px;height:3.90px;background:#f0952d;"></div>
<div style="left:757.85px;top:379.50px;width:4.30px;height:3.90px;background:#f0952d;"></div>
<div style="left:757.85px;top:387.50px;width:4.30px;height:3.90px;background:#f0952d;"></div>
<div style="left:757.85px;top:395.50px;width:4.30px;height:3.90px;background:#f0952d;"></div>
<div style="left:757.85px;top:403.50px;width:4.30px;height:3.90px;background:#f0952d;"></div>
<div style="left:757.85px;top:411.50px;width:4.30px;height:3.90px;background:#f0952d;"></div>
<div style="left:757.85px;top:419.50px;width:4.30px;height:3.90px;background:#f0952d;"></div>
<div style="left:757.85px;top:427.50px;width:4.30px;height:3.90px;background:#f0952d;"></div>
<div style="left:757.85px;top:435.50px;width:4.30px;height:3.90px;background:#f0952d;"></div>
<div style="left:757.85px;top:443.50px;width:4.30px;height:3.90px;background:#f0952d;"></div>
<div style="left:757.85px;top:451.50px;width:4.30px;height:3.90px;background:#f0952d;"></div>
<div style="left:292.85px;top:380.20px;width:4.30px;height:3.90px;background:#f0952d;"></div>
<div style="left:292.85px;top:388.20px;width:4.30px;height:3.90px;background:#f0952d;"></div>
<div style="left:292.85px;top:396.20px;width:4.30px;height:3.90px;background:#f0952d;"></div>
<div style="left:292.85px;top:404.20px;width:4.30px;height:3.90px;background:#f0952d;"></div>
<div style="left:292.85px;top:412.20px;width:4.30px;height:3.90px;background:#f0952d;"></div>
<div style="left:292.85px;top:420.20px;width:4.30px;height:3.90px;background:#f0952d;"></div>
<span class="t" style="left:167.50px;top:426.20px;height:16px;line-height:16px;font-size:11.9px;color:#262626;letter-spacing:0.002px;font-weight:bold;text-shadow:none;">3-Interrup must be enabled before macro end</span>
<span class="t" style="left:599.00px;top:436.10px;height:16px;line-height:16px;font-size:11.7px;color:#262626;letter-spacing:-0.030px;font-weight:bold;text-shadow:none;">1 - Select digital input</span>
<span class="t" style="left:683.00px;top:461.30px;height:16px;line-height:16px;font-size:11.9px;color:#262626;letter-spacing:0.026px;font-weight:bold;text-shadow:none;">2- Assign macro to execute</span>
</div></body></html>
